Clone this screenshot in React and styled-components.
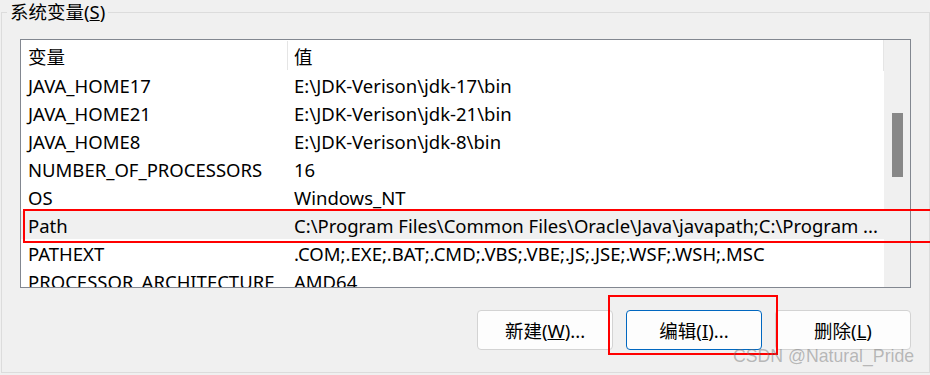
import React from "react";
import styled, { createGlobalStyle } from "styled-components";

const GlobalStyle = createGlobalStyle`
  html, body { margin: 0; padding: 0; background: #f0f0f0; }
  body { font-family: "Noto Sans", "Noto Sans CJK SC", sans-serif; color: #000; }
`;

const FONT = "18.5px";

const Page = styled.div`
  position: relative;
  width: 930px;
  height: 375px;
  overflow: hidden;
  background: #f0f0f0;
`;

const Group = styled.fieldset`
  box-sizing: border-box;
  margin: 0 0 0 1px;
  padding: 0;
  width: 929px;
  height: 373px;
  min-width: 0;
  border: 1px solid #dcdcdc;
`;

const Legend = styled.legend`
  margin-left: 5px;
  padding: 0 3px;
  font-size: ${FONT};
  line-height: 24px;
`;

const Body = styled.div`
  padding: 0 18px;
`;

const ListBox = styled.div`
  box-sizing: border-box;
  margin-top: 15px;
  width: 891px;
  height: 249px;
  border: 1px solid #828790;
  background: #fff;
  display: grid;
  grid-template-columns: 1fr 26px;
  overflow: hidden;
`;

const ListArea = styled.div`
  overflow: hidden;
  min-width: 0;
`;

const HeaderRow = styled.div`
  display: grid;
  grid-template-columns: 267px 1fr;
  height: 31px;
  border-right: 1px solid #e5e5e5;
`;

const HeaderCell = styled.div`
  display: flex;
  align-items: center;
  padding-left: ${(p) => p.$pad}px;
  font-size: ${FONT};
  border-right: ${(p) => (p.$sep ? "1px solid #e5e5e5" : "none")};
  margin: 1px 0;
`;

const Row = styled.div`
  display: grid;
  grid-template-columns: 267px 1fr;
  height: 28px;
  background: ${(p) => (p.$selected ? "#f0f0f0" : "transparent")};
`;

const Cell = styled.div`
  display: flex;
  align-items: center;
  padding-left: ${(p) => p.$pad}px;
  font-size: ${FONT};
  white-space: nowrap;
  overflow: hidden;
`;

const Track = styled.div`
  background: #f0f0f0;
`;

const Thumb = styled.div`
  width: 11px;
  height: 64px;
  margin: 73px auto 0;
  background: #888;
`;

const ButtonRow = styled.div`
  display: flex;
  justify-content: flex-end;
  gap: 13px;
  width: 891px;
  margin-top: 22px;
`;

const Button = styled.button`
  box-sizing: border-box;
  width: 136px;
  height: 40px;
  border-radius: 4px;
  border: 1px solid ${(p) => (p.$focused ? "#0067c0" : "#d3d3d3")};
  background: #fdfdfd;
  font-family: inherit;
  font-size: ${FONT};
  color: #000;
  padding: 0;
`;

const Mark = styled.div`
  position: absolute;
  box-sizing: border-box;
  border: 2px solid #ff0000;
  pointer-events: none;
`;

const Watermark = styled.div`
  position: absolute;
  left: 733px;
  top: 346px;
  font-family: "Liberation Sans", Arial, sans-serif;
  font-size: 17.7px;
  line-height: 20px;
  color: rgba(110, 110, 110, 0.45);
  white-space: nowrap;
`;

const rows = [
  ["JAVA_HOME17", "E:\\JDK-Verison\\jdk-17\\bin"],
  ["JAVA_HOME21", "E:\\JDK-Verison\\jdk-21\\bin"],
  ["JAVA_HOME8", "E:\\JDK-Verison\\jdk-8\\bin"],
  ["NUMBER_OF_PROCESSORS", "16"],
  ["OS", "Windows_NT"],
  ["Path", "C:\\Program Files\\Common Files\\Oracle\\Java\\javapath;C:\\Program ..."],
  ["PATHEXT", ".COM;.EXE;.BAT;.CMD;.VBS;.VBE;.JS;.JSE;.WSF;.WSH;.MSC"],
  ["PROCESSOR_ARCHITECTURE", "AMD64"],
];

export default function App() {
  return (
    <Page>
      <GlobalStyle />
      <Group>
        <Legend>
          系统变量(<u>S</u>)
        </Legend>
        <Body>
          <ListBox>
            <ListArea>
              <HeaderRow>
                <HeaderCell $pad={7} $sep>变量</HeaderCell>
                <HeaderCell $pad={6}>值</HeaderCell>
              </HeaderRow>
              {rows.map(([name, value]) => (
                <Row key={name} $selected={name === "Path"}>
                  <Cell $pad={7}>{name}</Cell>
                  <Cell $pad={6}>{value}</Cell>
                </Row>
              ))}
            </ListArea>
            <Track>
              <Thumb />
            </Track>
          </ListBox>
          <ButtonRow>
            <Button>
              新建(<u>W</u>)...
            </Button>
            <Button $focused>
              编辑(<u>I</u>)...
            </Button>
            <Button>
              删除(<u>L</u>)
            </Button>
          </ButtonRow>
        </Body>
      </Group>
      <Mark style={{ left: 23, top: 209, width: 920, height: 34 }} />
      <Mark style={{ left: 608, top: 295, width: 170, height: 60 }} />
      <Watermark>CSDN @Natural_Pride</Watermark>
    </Page>
  );
}
